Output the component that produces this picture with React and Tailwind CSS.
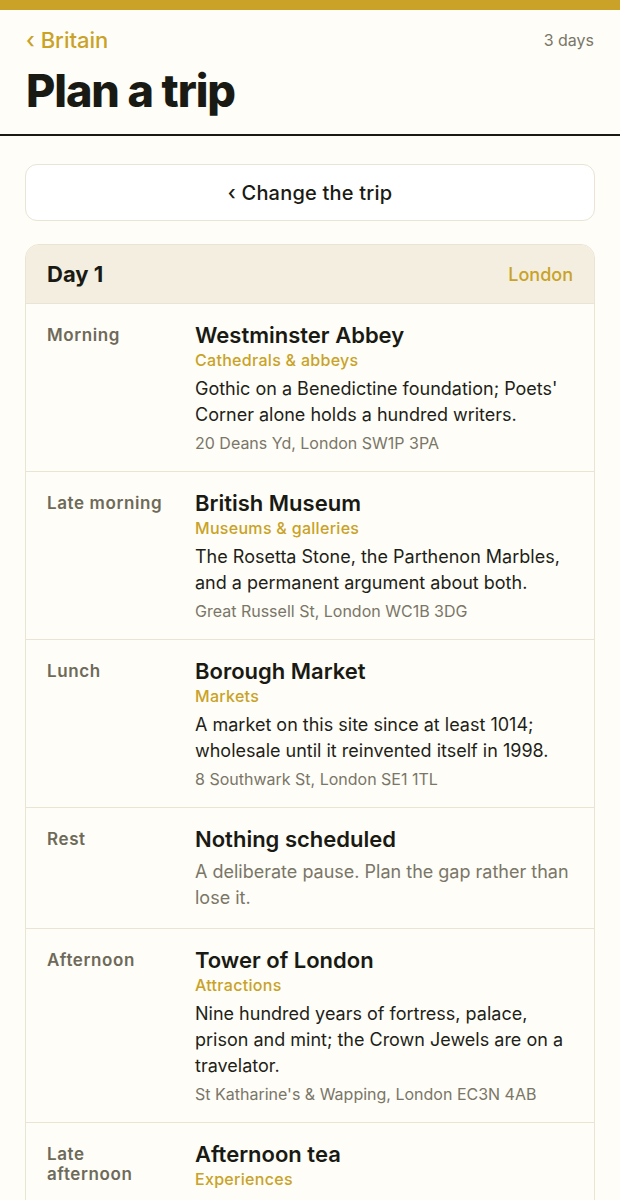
import React from "react";

const slots = [
  {
    time: "Morning",
    title: "Westminster Abbey",
    kind: "Cathedrals & abbeys",
    text: "Gothic on a Benedictine foundation; Poets' Corner alone holds a hundred writers.",
    address: "20 Deans Yd, London SW1P 3PA",
  },
  {
    time: "Late morning",
    title: "British Museum",
    kind: "Museums & galleries",
    text: "The Rosetta Stone, the Parthenon Marbles, and a permanent argument about both.",
    address: "Great Russell St, London WC1B 3DG",
  },
  {
    time: "Lunch",
    title: "Borough Market",
    kind: "Markets",
    text: "A market on this site since at least 1014; wholesale until it reinvented itself in 1998.",
    address: "8 Southwark St, London SE1 1TL",
  },
  {
    time: "Rest",
    title: "Nothing scheduled",
    rest: true,
    text: "A deliberate pause. Plan the gap rather than lose it.",
  },
  {
    time: "Afternoon",
    title: "Tower of London",
    kind: "Attractions",
    text: "Nine hundred years of fortress, palace, prison and mint; the Crown Jewels are on a travelator.",
    address: "St Katharine's & Wapping, London EC3N 4AB",
  },
  {
    time: "Late afternoon",
    title: "Afternoon tea",
    kind: "Experiences",
    text: "Scones, clotted cream and the endless question of which goes on first.",
    address: "Piccadilly, London W1J 9BR",
  },
];

function Slot({ slot }) {
  return (
    <div className="flex gap-[26px] border-t border-[#e9e4d3] pl-[21px] pr-[20px] pt-[18px] pb-[17px]">
      <div className="w-[122px] shrink-0 pt-[3px] text-[17px] leading-[20px] font-semibold tracking-[0.6px] text-[#6e6a5a]">
        {slot.time}
      </div>
      <div className="flex-1 min-w-0">
        <p className="text-[22px] leading-[26px] font-semibold text-[#1a1a14]">
          {slot.title}
        </p>
        {slot.kind && (
          <p className="text-[16px] leading-[24px] font-medium tracking-[0.3px] text-[#c9a227]">
            {slot.kind}
          </p>
        )}
        <p
          className={
            slot.rest
              ? "mt-[7px] text-[18px] leading-[26px] text-[#7a7668]"
              : "mt-[4px] text-[18px] leading-[26px] text-[#1f1f19]"
          }
        >
          {slot.text}
        </p>
        {slot.address && (
          <p className="mt-[4px] text-[16px] leading-[22px] text-[#7a7668]">
            {slot.address}
          </p>
        )}
      </div>
    </div>
  );
}

export default function App() {
  return (
    <div
      className="min-h-[1200px] bg-[#fefdf7]"
      style={{ fontFamily: "Inter, 'Noto Sans', sans-serif" }}
    >
      <div className="h-[10px] bg-[#c9a227]" />

      {/* header */}
      <div className="px-[26px] pt-[16px] pb-[19px] border-b-2 border-[#1a1a14]">
        <div className="flex justify-between items-center h-[28px]">
          <span className="text-[22px] font-medium text-[#c9a227]">‹ Britain</span>
          <span className="text-[16px] text-[#7a7668]">3 days</span>
        </div>
        <h1 className="mt-[13px] text-[45px] leading-[48px] font-extrabold tracking-[-1.1px] text-[#1a1a14]">
          Plan a trip
        </h1>
      </div>

      <div className="px-[25px] pt-[28px] flex flex-col gap-[23px]">
        <button className="h-[57px] w-full rounded-[12px] border border-[#e9e4d3] bg-white text-[20px] font-medium tracking-[0.2px] text-[#1a1a14]">
          ‹ Change the trip
        </button>

        <div className="rounded-[14px] border border-[#e9e4d3] overflow-hidden">
          <div className="h-[58px] bg-[#f3eedf] flex items-center justify-between pl-[21px] pr-[21px]">
            <span className="text-[22px] font-bold text-[#1a1a14]">Day 1</span>
            <span className="text-[18px] font-medium text-[#c9a227]">London</span>
          </div>
          {slots.map((s, i) => (
            <Slot key={i} slot={s} />
          ))}
        </div>
      </div>
    </div>
  );
}
